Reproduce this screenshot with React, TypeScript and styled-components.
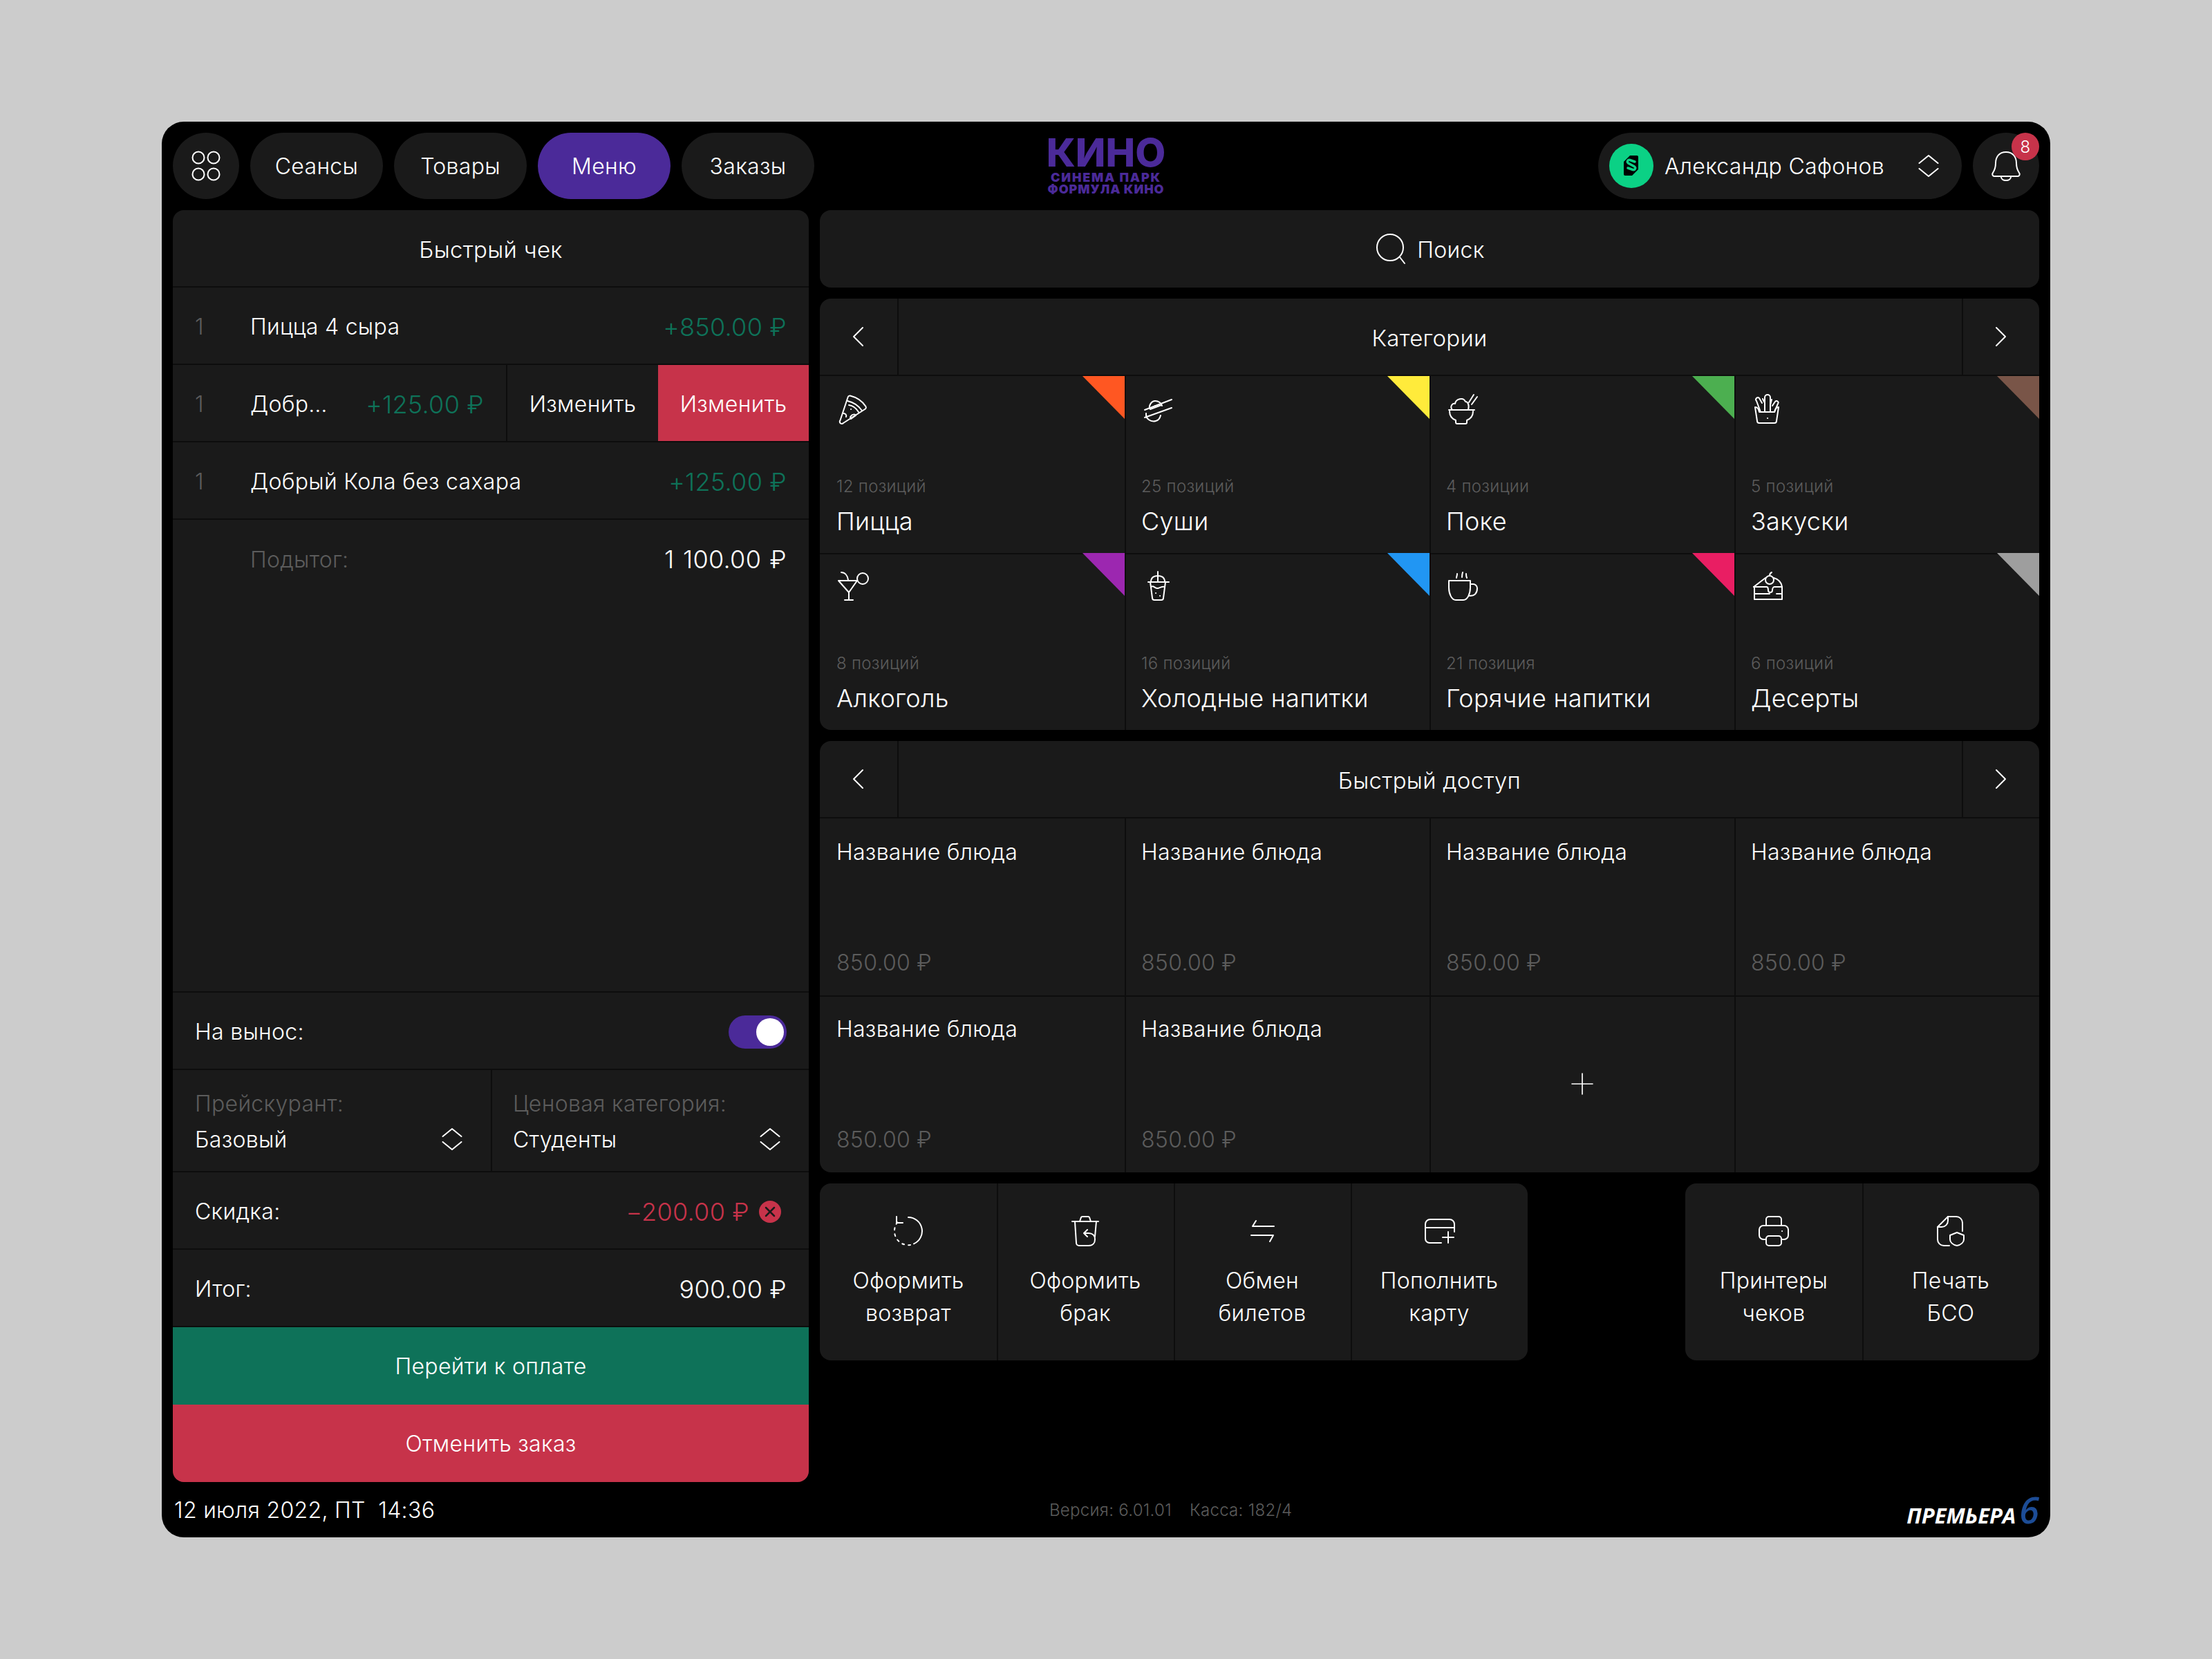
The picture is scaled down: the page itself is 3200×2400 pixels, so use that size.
import React from "react";
import styled, { createGlobalStyle } from "styled-components";

const Global = createGlobalStyle`
  html, body { margin: 0; padding: 0; background: #cccccc; }
  body { font-family: Inter, "Noto Sans", sans-serif; font-weight: 300; color: #fff; letter-spacing: 0.3px; }
  * { box-sizing: border-box; }
`;

const PANEL = "#1a1a1a";
const SEP = "#0d0d0d";
const MUTED = "#5c5c5c";
const GREEN = "#0e7259";
const RED = "#c7334a";
const PURPLE = "#4b2a99";

const Page = styled.div`
  width: 3200px;
  height: 2400px;
  padding: 176px 234px;
`;
const Frame = styled.div`
  width: 2732px;
  height: 2048px;
  background: #000;
  border-radius: 32px;
  padding: 16px 16px 0;
  display: flex;
  flex-direction: column;
  gap: 16px;
  overflow: hidden;
`;
const Header = styled.header`
  display: grid;
  grid-template-columns: 1fr auto 1fr;
  align-items: center;
  height: 96px;
`;
const Nav = styled.nav`
  display: flex;
  gap: 16px;
`;
const HeaderRight = styled.div`
  display: flex;
  justify-content: flex-end;
  gap: 16px;
`;
const Pill = styled.button<{ $active?: boolean }>`
  height: 96px;
  width: 192px;
  border: 0;
  border-radius: 48px;
  background: ${(p) => (p.$active ? PURPLE : PANEL)};
  color: #fff;
  font: inherit;
  letter-spacing: inherit;
  font-size: 32px;
  display: flex;
  align-items: center;
  justify-content: center;
  padding: 0;
`;
const RoundPill = styled(Pill)`
  width: 96px;
  position: relative;
`;
const Badge = styled.span`
  position: absolute;
  top: 0;
  right: 0;
  width: 40px;
  height: 40px;
  border-radius: 50%;
  background: ${RED};
  font-size: 24px;
  display: flex;
  align-items: center;
  justify-content: center;
`;
const UserPill = styled.div`
  width: 526px;
  height: 96px;
  border-radius: 48px;
  background: ${PANEL};
  display: flex;
  align-items: center;
  padding: 0 24px 0 16px;
  font-size: 32px;
`;
const Avatar = styled.span`
  width: 64px;
  height: 64px;
  border-radius: 50%;
  background: #0bd185;
  display: flex;
  align-items: center;
  justify-content: center;
  margin-right: 16px;
`;
const UserName = styled.span`
  flex: 1;
  white-space: nowrap;
`;
const Logo = styled.div`
  display: flex;
  flex-direction: column;
  align-items: center;
  color: ${PURPLE};
  font-family: Inter, sans-serif;
`;
const LogoMain = styled.span`
  font-size: 57px;
  font-weight: 800;
  height: 41px;
  line-height: 41px;
  letter-spacing: 0;
  margin-bottom: 9px;
`;
const LogoSub = styled.span<{ $tight?: boolean }>`
  font-size: 18px;
  height: 13px;
  line-height: 13px;
  letter-spacing: ${(p) => (p.$tight ? "0.9px" : "1.8px")};
  white-space: nowrap;
  font-weight: 900;
  margin-bottom: ${(p) => (p.$tight ? "0" : "4px")};
`;
const Main = styled.div`
  display: grid;
  grid-template-columns: 920px 1764px;
  gap: 16px;
  height: 1840px;
`;
const Check = styled.section`
  background: ${PANEL};
  border-radius: 16px;
  display: flex;
  flex-direction: column;
  overflow: hidden;
`;
const CheckTitle = styled.div`
  height: 112px;
  display: flex;
  align-items: center;
  justify-content: center;
  padding-top: 3px;
  font-size: 33px;
  border-bottom: 2px solid ${SEP};
  flex: none;
`;
const Row = styled.div`
  height: 112px;
  flex: none;
  display: flex;
  align-items: center;
  padding: 3px 32px 0;
  font-size: 32px;
  border-bottom: 2px solid ${SEP};
`;
const Qty = styled.span`
  width: 80px;
  color: ${MUTED};
`;
const ItemName = styled.span`
  flex: 1;
  white-space: nowrap;
`;
const Amount = styled.span<{ $tone?: "green" | "red" | "white" }>`
  font-size: 36px;
  white-space: nowrap;
  color: ${(p) => (p.$tone === "green" ? GREEN : p.$tone === "red" ? RED : "#fff")};
`;
const WideAmount = styled(Amount)`
  word-spacing: 2px;
`;
const SwipeRow = styled.div`
  height: 112px;
  flex: none;
  display: grid;
  grid-template-columns: 484px 218px 218px;
  font-size: 32px;
  border-bottom: 2px solid ${SEP};
`;
const SwipeMain = styled.div`
  display: flex;
  align-items: center;
  padding: 3px 32px 0;
  border-right: 2px solid ${SEP};
`;
const SwipeAction = styled.div<{ $danger?: boolean }>`
  display: flex;
  align-items: center;
  justify-content: center;
  padding-top: 3px;
  background: ${(p) => (p.$danger ? RED : "transparent")};
`;
const Subtotal = styled.div`
  display: flex;
  padding: 2px 32px 0;
  height: 112px;
  align-items: center;
  font-size: 32px;
  color: ${MUTED};
`;
const SubtotalWrap = styled.div`
  flex: 1;
  border-bottom: 2px solid ${SEP};
`;
const Toggle = styled.span`
  width: 84px;
  height: 48px;
  border-radius: 24px;
  background: ${PURPLE};
  display: flex;
  align-items: center;
  justify-content: flex-end;
  padding: 4px;
`;
const Knob = styled.span`
  width: 40px;
  height: 40px;
  border-radius: 50%;
  background: #fff;
`;
const SelectRow = styled.div`
  height: 148px;
  flex: none;
  display: grid;
  grid-template-columns: 460px 460px;
  border-bottom: 2px solid ${SEP};
`;
const SelectCell = styled.div`
  display: grid;
  grid-template-columns: 1fr 48px;
  grid-template-rows: 52px 52px;
  align-content: center;
  align-items: center;
  padding: 2px 32px 0;
  font-size: 32px;
  & + & {
    box-shadow: inset 2px 0 0 ${SEP};
  }
`;
const SelectLabel = styled.span`
  grid-column: 1 / 3;
  color: ${MUTED};
  white-space: nowrap;
`;
const ClearIcon = styled.svg`
  width: 32px;
  height: 32px;
  margin: 0 8px 0 14px;
  flex: none;
`;
const BigButton = styled.button<{ $tone: "green" | "red" }>`
  height: 112px;
  flex: none;
  border: 0;
  padding: 0;
  background: ${(p) => (p.$tone === "green" ? GREEN : RED)};
  color: #fff;
  font: inherit;
  letter-spacing: inherit;
  font-size: 32px;
`;
const Right = styled.div`
  display: flex;
  flex-direction: column;
  gap: 16px;
`;
const Search = styled.div`
  height: 112px;
  background: ${PANEL};
  border-radius: 16px;
  display: flex;
  align-items: center;
  justify-content: center;
  gap: 14px;
  font-size: 32px;
`;
const SearchLabel = styled.span`
  padding-top: 2px;
`;
const Panel = styled.section`
  background: ${PANEL};
  border-radius: 16px;
  overflow: hidden;
`;
const PanelHead = styled.div`
  height: 112px;
  display: grid;
  grid-template-columns: 112px 1fr 112px;
  border-bottom: 2px solid ${SEP};
  font-size: 33px;
`;
const Arrow = styled.div<{ $left?: boolean }>`
  display: flex;
  align-items: center;
  justify-content: center;
  box-shadow: ${(p) => (p.$left ? "none" : `inset 2px 0 0 ${SEP}`)};
`;
const PanelTitle = styled.div`
  display: flex;
  align-items: center;
  justify-content: center;
  padding-top: 3px;
  box-shadow: inset 2px 0 0 ${SEP};
`;
const Grid = styled.div`
  display: grid;
  grid-template-columns: repeat(4, 1fr);
  grid-auto-rows: 256px;
  height: 512px;
`;
const Cell = styled.div`
  position: relative;
  padding: 24px;
  display: flex;
  flex-direction: column;
  box-shadow: inset 2px 0 0 ${SEP};
  &:nth-child(4n + 1) {
    box-shadow: none;
  }
  &:nth-child(n + 5) {
    box-shadow: inset 2px 2px 0 ${SEP};
  }
  &:nth-child(5) {
    box-shadow: inset 0 2px 0 ${SEP};
  }
`;
const Corner = styled.span<{ $color: string }>`
  position: absolute;
  top: 0;
  right: 0;
  width: 61px;
  height: 62px;
  background: ${(p) => p.$color};
  clip-path: polygon(0 0, 100% 0, 100% 100%);
`;
const IconBox = styled.span`
  width: 48px;
  height: 48px;
  display: block;
  flex: none;
`;
const CatCount = styled.span`
  margin-top: auto;
  font-size: 24px;
  color: ${MUTED};
  line-height: 32px;
`;
const CatName = styled.span`
  margin-top: 10px;
  margin-bottom: -2px;
  font-size: 36px;
  line-height: 48px;
  white-space: nowrap;
`;
const DishName = styled.span`
  font-size: 32px;
  line-height: 48px;
  padding-top: 1px;
`;
const DishPrice = styled.span`
  margin-top: auto;
  margin-bottom: -1px;
  font-size: 32px;
  line-height: 48px;
  color: ${MUTED};
`;
const AddCell = styled(Cell)`
  align-items: center;
  justify-content: center;
`;
const Actions = styled.div`
  display: flex;
  justify-content: space-between;
`;
const ActionGroup = styled.div`
  display: flex;
  background: ${PANEL};
  border-radius: 16px;
  overflow: hidden;
`;
const Action = styled.div`
  width: 256px;
  height: 256px;
  display: flex;
  flex-direction: column;
  align-items: center;
  justify-content: center;
  gap: 24px;
  font-size: 32px;
  & + & {
    box-shadow: inset 2px 0 0 ${SEP};
  }
`;
const ActionText = styled.span`
  text-align: center;
  line-height: 47px;
`;
const Footer = styled.footer`
  display: flex;
  justify-content: space-between;
  align-items: center;
  height: 64px;
  margin-top: -16px;
  padding: 16px 0 0 2px;
  font-size: 32px;
`;
const FooterDate = styled.span`
  white-space: pre;
`;
const FooterInfo = styled.span`
  display: flex;
  gap: 26px;
  font-size: 24px;
  color: ${MUTED};
`;
const Brand = styled.span`
  display: flex;
  align-items: baseline;
  font-family: "Open Sans", sans-serif;
  font-style: italic;
  font-weight: 700;
  font-size: 31px;
  letter-spacing: 0;
  line-height: 1;
`;
const BrandSix = styled.span`
  color: #1c4c96;
  font-size: 52px;
  font-weight: 600;
  margin-left: 5px;
`;

const Svg: React.FC<{ size?: number; children: React.ReactNode }> = ({ size = 48, children }) => (
  <svg width={size} height={size} viewBox="0 0 48 48" fill="none" stroke="#fff" strokeWidth={2} strokeLinecap="round" strokeLinejoin="round">
    {children}
  </svg>
);

const Icons: Record<string, React.ReactNode> = {
  apps: (
    <>
      <circle cx="13" cy="12" r="8.500" />
      <circle cx="35" cy="12" r="8.500" />
      <circle cx="13" cy="36" r="8.500" />
      <circle cx="35" cy="36" r="8.500" />
    </>
  ),
  pizza: (
    <>
      <path d="M5.500 40 16.500 7a3 3 0 0 1 3.500-2.500C30 7 38 13 42.500 20a3 3 0 0 1-.5 3.500L10 44a3 3 0 0 1-4.500-4Z" />
      <path d="M16 12c9 2 16 7 21 14M18 18c6 1 11 5 14 10" />
      <path d="M10 30c3 0 5 2 4 5M21 34c2-3 6-3 7-1l-7 5a3 3 0 0 1 0-4Z" />
      <path d="M21 24h.1" />
    </>
  ),
  sushi: (
    <>
      <path d="M5 25 44 10M5 36 44 22" />
      <path d="M12 23c-1-5 3-11 8-11s9 3 10 7M13 24l16-6" />
      <path d="M7 30c-1 8 7 13 14 11 4-1 6-4 7-8" />
      <path d="M20 19h.1" />
    </>
  ),
  poke: (
    <>
      <path d="M4 25h37" />
      <path d="M5 27c0 7 4 11 9 13v3a2 2 0 0 0 2 2h12a2 2 0 0 0 2-2v-3c5-2 9-6 9-13" />
      <path d="M9 25c-4-5 0-10 4-9 1-7 12-10 15-3 3 0 6 4 4 12" />
      <path d="M33 14 40 3M37 17 45 6" />
    </>
  ),
  fries: (
    <>
      <path d="M6 21l3 20a3 3 0 0 0 3 3h22a3 3 0 0 0 3-3l3-20c-4 0-5 3-6 7H12c-1-4-2-7-6-7Z" />
      <path d="M14 28 8 12a2.500 2.500 0 0 1 4-4l4 7M20 28V7a4 4 0 0 1 8 0v21M34 28l5-12a2.500 2.500 0 0 0-4-3l-4 6M28 18l2-8M20 15l-3-6" />
      <path d="M24 37h.1" />
    </>
  ),
  cocktail: (
    <>
      <path d="M3 16h27L18 33 3 16Z" />
      <path d="M18 33v11M12 44h12" />
      <path d="M7 4c5 0 9 4 10 11" />
      <circle cx="38" cy="13" r="8" />
    </>
  ),
  cold: (
    <>
      <path d="M24 3v15M14 18c0-6 4-9 10-9s10 3 10 9" />
      <path d="M10 18h30" />
      <path d="M13 18l3 23a3 3 0 0 0 3 3h10a3 3 0 0 0 3-3l3-23" />
      <path d="M14 25c4-3 6 3 10 2s6-3 10-2" />
      <path d="M21 34h.1M27 38h.1" />
    </>
  ),
  coffee: (
    <>
      <path d="M4 16h31v10c0 9-4 18-10 18H14C8 44 4 35 4 26V16Z" />
      <path d="M35 21h4a6 6 0 0 1 6 6c0 7-4 11-11 11" />
      <path d="M15 12c0-2 1-3 1-6M23 11c0-2 0-4 1-7M30 12c-1-2-1-4-1-6" />
    </>
  ),
  cake: (
    <>
      <path d="M4 25 21 12M33 12c7 2 11 6 12 13" />
      <path d="M4 25h19c1 0 2 2 2 5 0 4 6 4 6 0 0-2 1-5 3-5h11" />
      <path d="M5 25v18h40V25M5 35h22M37 35h8" />
      <circle cx="27" cy="15" r="6" />
      <path d="M27 9c0-2 1-4 3-5" />
    </>
  ),
  search: (
    <>
      <circle cx="23" cy="22" r="19" />
      <path d="m37 36 7 9" />
    </>
  ),
  bell: (
    <>
      <path d="M24 4C14 4 9 11 9 20c0 7-2 11-4 14a3 3 0 0 0 2 5h34a3 3 0 0 0 2-5c-2-3-4-7-4-14 0-9-5-16-15-16Z" />
      <path d="M17 40c0 3 3 5 7 5s7-2 7-5" />
    </>
  ),
  updown: <path d="M10.500 20 24 9l13.500 11M10.500 28 24 39l13.500-11" />,
  left: <path d="m30 11-13 13 13 13" />,
  right: <path d="m18 11 13 13-13 13" />,
  plus: <path d="M24 6v36M6 24h36" />,
  back: (
    <>
      <path d="M24 4a20 20 0 0 1 8 38.300" />
      <path d="M27 44A20 20 0 0 1 4 24c0-6 2-11 6-14" strokeDasharray="3 6" />
      <path d="M7 3v9h9" />
    </>
  ),
  trash: (
    <>
      <path d="M5 10h38" />
      <path d="M16 10l2-6a2 2 0 0 1 2-1h8a2 2 0 0 1 2 1l2 6" />
      <path d="M9 10l2 31a4 4 0 0 0 4 4h14c6 0 9-4 9-9 0-6-4-9-9-9h-6" />
      <path d="m27 22-5 5 5 5M40 10l-2 22" />
    </>
  ),
  swap: <path d="M10 17h31M10 17l5-8M8 30h32M40 30l-5 9" />,
  card: (
    <>
      <path d="M27 41H10a6 6 0 0 1-6-6V14a7 7 0 0 1 7-7h28a7 7 0 0 1 7 7v11" />
      <path d="M4 19h42M37 25v16M29 33h16" />
    </>
  ),
  printer: (
    <>
      <path d="M13 16V7a4 4 0 0 1 4-4h14a4 4 0 0 1 4 4v9" />
      <path d="M13 36H9a6 6 0 0 1-6-6V22a6 6 0 0 1 6-6h30a6 6 0 0 1 6 6v8a6 6 0 0 1-6 6h-4" />
      <rect x="13" y="31" width="22" height="14" rx="4" />
      <path d="M36 24h.1" />
    </>
  ),
  bso: (
    <>
      <path d="M22 45H14a9 9 0 0 1-9-9V18L20 3h12a9 9 0 0 1 9 9v12" />
      <path d="M5 18h6c5 0 9-4 9-9V3" />
      <path d="M33 26l10 4v6c0 4-4 8-10 9-6-1-10-5-10-9v-6l10-4Z" />
    </>
  ),
};

const Icon: React.FC<{ name: string; size?: number }> = ({ name, size }) => <Svg size={size}>{Icons[name]}</Svg>;

const categories = [
  { icon: "pizza", count: "12 позиций", name: "Пицца", color: "#ff5722" },
  { icon: "sushi", count: "25 позиций", name: "Суши", color: "#ffeb3b" },
  { icon: "poke", count: "4 позиции", name: "Поке", color: "#4caf50" },
  { icon: "fries", count: "5 позиций", name: "Закуски", color: "#795548" },
  { icon: "cocktail", count: "8 позиций", name: "Алкоголь", color: "#9c27b0" },
  { icon: "cold", count: "16 позиций", name: "Холодные напитки", color: "#2196f3" },
  { icon: "coffee", count: "21 позиция", name: "Горячие напитки", color: "#e91e63" },
  { icon: "cake", count: "6 позиций", name: "Десерты", color: "#9e9e9e" },
];

export default function App() {
  return (
    <Page>
      <Global />
      <Frame>
        <Header>
          <Nav>
            <RoundPill>
              <Icon name="apps" />
            </RoundPill>
            <Pill>Сеансы</Pill>
            <Pill>Товары</Pill>
            <Pill $active>Меню</Pill>
            <Pill>Заказы</Pill>
          </Nav>
          <Logo>
            <LogoMain>КИНО</LogoMain>
            <LogoSub>СИНЕМА ПАРК</LogoSub>
            <LogoSub $tight>ФОРМУЛА КИНО</LogoSub>
          </Logo>
          <HeaderRight>
            <UserPill>
              <Avatar>
                <svg width="40" height="40" viewBox="0 0 40 40">
                  <path d="M18 5h10a2 2 0 0 1 2 2v18l-9 9H11a2 2 0 0 1-2-2V14Z" fill="#000" />
                  <path d="M25 14l-7-2.500c-3-1-5 2.500-2.500 4.500l9 5c2.500 2 .5 5.500-2.500 4.500L15 23" fill="none" stroke="#0bd185" strokeWidth="3.500" strokeLinecap="round" />
                </svg>
              </Avatar>
              <UserName>Александр Сафонов</UserName>
              <Icon name="updown" />
            </UserPill>
            <RoundPill>
              <Icon name="bell" />
              <Badge>8</Badge>
            </RoundPill>
          </HeaderRight>
        </Header>
        <Main>
          <Check>
            <CheckTitle>Быстрый чек</CheckTitle>
            <Row>
              <Qty>1</Qty>
              <ItemName>Пицца 4 сыра</ItemName>
              <Amount $tone="green">+850.00 ₽</Amount>
            </Row>
            <SwipeRow>
              <SwipeMain>
                <Qty>1</Qty>
                <ItemName>Добр…</ItemName>
                <Amount $tone="green">+125.00 ₽</Amount>
              </SwipeMain>
              <SwipeAction>Изменить</SwipeAction>
              <SwipeAction $danger>Изменить</SwipeAction>
            </SwipeRow>
            <Row>
              <Qty>1</Qty>
              <ItemName>Добрый Кола без сахара</ItemName>
              <Amount $tone="green">+125.00 ₽</Amount>
            </Row>
            <SubtotalWrap>
              <Subtotal>
                <Qty />
                <ItemName>Подытог:</ItemName>
                <WideAmount $tone="white">1 100.00 ₽</WideAmount>
              </Subtotal>
            </SubtotalWrap>
            <Row>
              <ItemName>На вынос:</ItemName>
              <Toggle>
                <Knob />
              </Toggle>
            </Row>
            <SelectRow>
              <SelectCell>
                <SelectLabel>Прейскурант:</SelectLabel>
                <span>Базовый</span>
                <Icon name="updown" />
              </SelectCell>
              <SelectCell>
                <SelectLabel>Ценовая категория:</SelectLabel>
                <span>Студенты</span>
                <Icon name="updown" />
              </SelectCell>
            </SelectRow>
            <Row>
              <ItemName>Скидка:</ItemName>
              <Amount $tone="red">−200.00 ₽</Amount>
              <ClearIcon viewBox="0 0 32 32">
                <circle cx="16" cy="16" r="16" fill={RED} />
                <path d="m10 10 12 12M22 10 10 22" stroke="#1a1a1a" strokeWidth="2.500" strokeLinecap="round" />
              </ClearIcon>
            </Row>
            <Row>
              <ItemName>Итог:</ItemName>
              <Amount $tone="white">900.00 ₽</Amount>
            </Row>
            <BigButton $tone="green">Перейти к оплате</BigButton>
            <BigButton $tone="red">Отменить заказ</BigButton>
          </Check>
          <Right>
            <Search>
              <Icon name="search" />
              <SearchLabel>Поиск</SearchLabel>
            </Search>
            <Panel>
              <PanelHead>
                <Arrow $left>
                  <Icon name="left" />
                </Arrow>
                <PanelTitle>Категории</PanelTitle>
                <Arrow>
                  <Icon name="right" />
                </Arrow>
              </PanelHead>
              <Grid>
                {categories.map((c) => (
                  <Cell key={c.name}>
                    <IconBox>
                      <Icon name={c.icon} />
                    </IconBox>
                    <Corner $color={c.color} />
                    <CatCount>{c.count}</CatCount>
                    <CatName>{c.name}</CatName>
                  </Cell>
                ))}
              </Grid>
            </Panel>
            <Panel>
              <PanelHead>
                <Arrow $left>
                  <Icon name="left" />
                </Arrow>
                <PanelTitle>Быстрый доступ</PanelTitle>
                <Arrow>
                  <Icon name="right" />
                </Arrow>
              </PanelHead>
              <Grid>
                {[0, 1, 2, 3, 4, 5].map((i) => (
                  <Cell key={i}>
                    <DishName>Название блюда</DishName>
                    <DishPrice>850.00 ₽</DishPrice>
                  </Cell>
                ))}
                <AddCell>
                  <Icon name="plus" size={40} />
                </AddCell>
                <Cell />
              </Grid>
            </Panel>
            <Actions>
              <ActionGroup>
                <Action>
                  <Icon name="back" />
                  <ActionText>
                    Оформить
                    <br />
                    возврат
                  </ActionText>
                </Action>
                <Action>
                  <Icon name="trash" />
                  <ActionText>
                    Оформить
                    <br />
                    брак
                  </ActionText>
                </Action>
                <Action>
                  <Icon name="swap" />
                  <ActionText>
                    Обмен
                    <br />
                    билетов
                  </ActionText>
                </Action>
                <Action>
                  <Icon name="card" />
                  <ActionText>
                    Пополнить
                    <br />
                    карту
                  </ActionText>
                </Action>
              </ActionGroup>
              <ActionGroup>
                <Action>
                  <Icon name="printer" />
                  <ActionText>
                    Принтеры
                    <br />
                    чеков
                  </ActionText>
                </Action>
                <Action>
                  <Icon name="bso" />
                  <ActionText>
                    Печать
                    <br />
                    БСО
                  </ActionText>
                </Action>
              </ActionGroup>
            </Actions>
          </Right>
        </Main>
        <Footer>
          <FooterDate>12 июля 2022, ПТ  14:36</FooterDate>
          <FooterInfo>
            <span>Версия: 6.01.01</span>
            <span>Касса: 182/4</span>
          </FooterInfo>
          <Brand>
            ПРЕМЬЕРА<BrandSix>6</BrandSix>
          </Brand>
        </Footer>
      </Frame>
    </Page>
  );
}
